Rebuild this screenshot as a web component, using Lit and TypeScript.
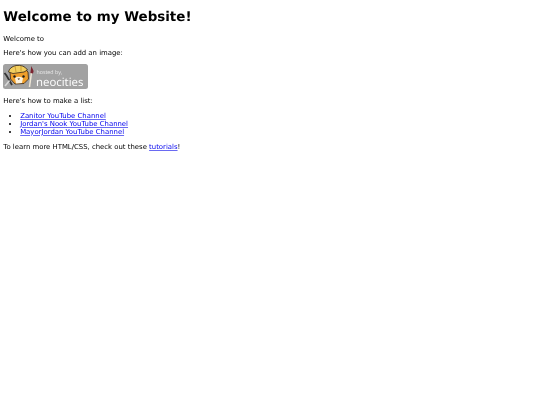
import { LitElement, html, css } from "lit";
import { customElement } from "lit/decorators.js";

@customElement("app-root")
export class AppRoot extends LitElement {
  static styles = css`
    :host { display: block; font-family: "DejaVu Sans", sans-serif; font-size: 6.9px; line-height: 8px; color: #000; background: #fff; min-height: 405px; text-rendering: geometricPrecision; }
    .page { padding: 10px 3.36px 0; display: flex; flex-direction: column; align-items: flex-start; filter: blur(0.25px); }
    h1 { font-size: 13.44px; line-height: 15.65px; font-weight: 700; margin: 0 0 9.3px; }
    p { margin: 0 0 6.4px; }
    p.tight { margin-bottom: 6.7px; }
    a { color: #0000ee; text-decoration: underline; text-decoration-color: #6a6af2; text-decoration-thickness: 0.5px; }
    ul { margin: 0 0 7.2px; padding: 0 0 0 16.8px; }
    .badge { display: block; width: 85px; height: 25px; margin: 0 0 8.2px; }
    .hosted { font: 5.3px "Open Sans", sans-serif; fill: #e8e8e8; }
    .neo { font: 400 11.4px "Open Sans", sans-serif; fill: #fff; }
  `;
  render() {
    return html`<div class="page">
      <h1>Welcome to my Website!</h1>
      <p>Welcome to</p>
      <p class="tight">Here's how you can add an image:</p>
      <svg class="badge" viewBox="0 0 85 25">
        <rect width="85" height="25" rx="2.5" fill="#a2a2a2"/>
        <text class="hosted" x="33.5" y="9.5">hosted by,</text>
        <text class="neo" x="33" y="21.5">neocities</text>
        <path d="M1.5 9 L3.5 11.5 L9 21" stroke="#333" stroke-width="1.8" fill="none"/>
        <path d="M2 22 L6.5 16.5" stroke="#d8d8d8" stroke-width="1.6" fill="none"/>
        <path d="M7 8 L9 5 L22 5 L25 8 L25.5 15 L21 19.5 L12 20 L7.5 15 Z" fill="#ef9f2b" stroke="#33261a" stroke-width=".8"/>
        <path d="M5.5 8 Q6.5 3 13 1.5 Q21 0.5 24.5 6 L21 8 L10 9.5 Z" fill="#f3cf5f" stroke="#33261a" stroke-width=".8"/>
        <path d="M12 2 L13 8 M18 2 L18 7.5" stroke="#b98a24" stroke-width=".7"/>
        <path d="M12 14 Q15.5 11.5 20 14 L19 19 L13 19.5 Z" fill="#fbf2df"/>
        <circle cx="11.5" cy="12.5" r="1.2" fill="#1c1c1c"/><circle cx="20.5" cy="12.5" r="1.2" fill="#1c1c1c"/>
        <path d="M14.5 14.5 L17 14.5 L15.8 16 Z" fill="#33261a"/>
        <path d="M26.5 23 L28.5 8.5" stroke="#efe7d6" stroke-width="1.5"/>
        <path d="M27.4 9 L28.3 2 L30.6 7 L30 9.5 Z" fill="#7d2430"/>
      </svg>
      <p>Here's how to make a list:</p>
      <ul>
        <li><a href="#">Zanitor YouTube Channel</a></li>
        <li><a href="#">Jordan's Nook YouTube Channel</a></li>
        <li><a href="#">MayorJordan YouTube Channel</a></li>
      </ul>
      <p>To learn more HTML/CSS, check out these <a href="#">tutorials</a>!</p>
    </div>`;
  }
}
